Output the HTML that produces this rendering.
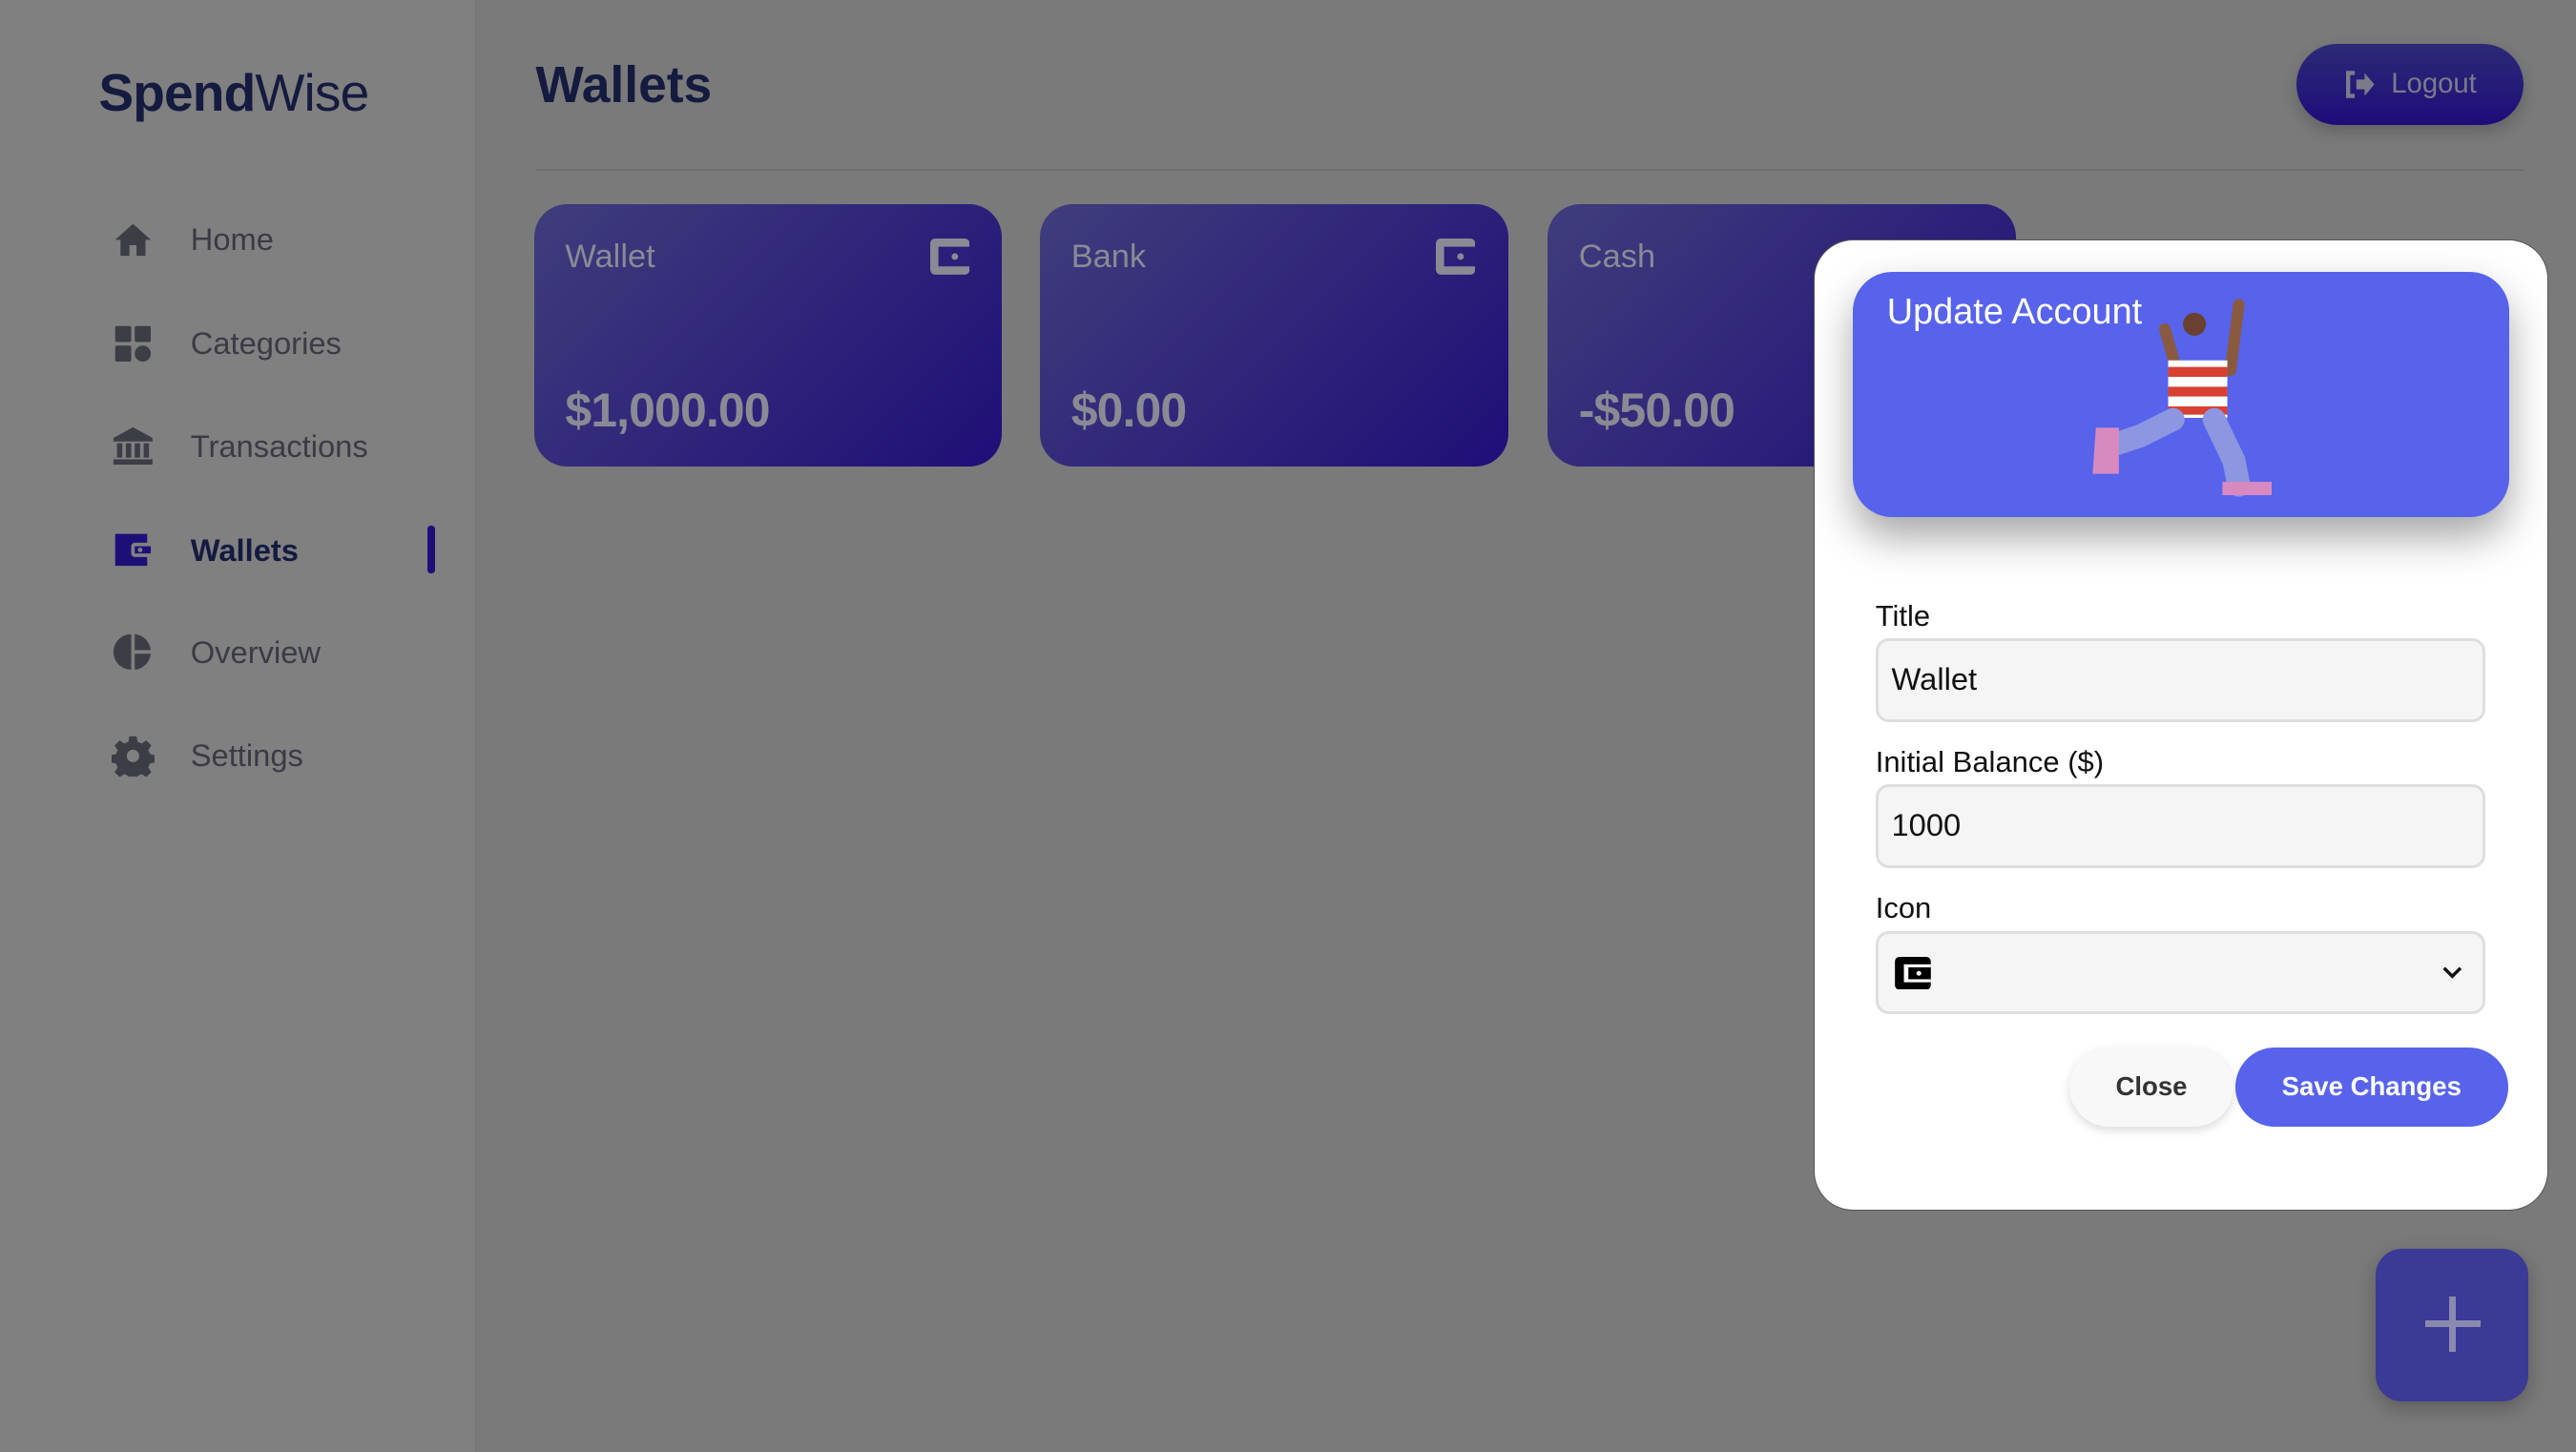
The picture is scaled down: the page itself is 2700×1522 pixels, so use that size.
<!DOCTYPE html>
<html><head><meta charset="utf-8"><style>
*{box-sizing:border-box;margin:0;padding:0}
html,body{width:2700px;height:1522px;overflow:hidden;background:#7a7a7a}
#root{zoom:1.72194;width:1568px;height:884px;position:relative;font-family:"Liberation Sans",sans-serif;background:#7a7a7a}
.side{position:absolute;left:0;top:0;width:290px;height:884px;background:#808080;border-right:1px solid #747474}
.logo{position:absolute;left:60px;top:38px;font-size:32px;color:#151a3f;letter-spacing:-0.5px}
.logo b{font-weight:700}
.nav{position:absolute;left:68px;font-size:19px;color:#3a3b44;display:flex;align-items:center}
.nav svg{width:26px;height:26px;margin-right:22px;fill:#3c3d45}
.nav.act{color:#151a3f;font-weight:700}
.nav.act svg{fill:#1e0f78}
.bar{position:absolute;left:260px;top:320px;width:5px;height:29px;background:#1e0f78;border-radius:2px}
h1{position:absolute;left:326px;top:34px;font-size:31px;color:#151a3f;font-weight:700}
.hr{position:absolute;left:326px;top:103px;width:1210px;height:1px;background:#6e6e6e}
.logout{position:absolute;left:1398px;top:27px;width:138px;height:49px;border-radius:25px;background:linear-gradient(#2c2a76,#1e0c7a);color:#7b7b8a;font-size:17px;display:flex;align-items:center;justify-content:center;box-shadow:0 4px 10px rgba(0,0,0,.2)}
.card{position:absolute;top:124px;width:285px;height:160px;border-radius:20px;background:linear-gradient(135deg,#403d7c,#1f0e78);color:#8a8a95}
.card .t{position:absolute;left:19px;top:21px;font-size:20px}
.card .a{position:absolute;left:19px;top:109px;font-size:29px;font-weight:700;letter-spacing:-0.5px}
.card svg{position:absolute;right:20px;top:21px;width:24px;height:22px}
.modal{position:absolute;left:1104px;top:146px;width:447px;height:591px;background:#fff;border-radius:24px;border:1px solid #555}
.hdr{position:absolute;left:23px;top:19px;width:400px;height:149px;border-radius:24px;background:#5763eb;box-shadow:0 12px 25px rgba(0,0,0,.35);overflow:hidden}
.hdr span{position:absolute;left:21px;top:12px;color:#fff;font-size:22px}
.lbl{position:absolute;left:37px;font-size:18px;color:#111}
.inp{position:absolute;left:37px;width:371px;height:51px;border:2px solid #dedede;border-radius:8px;background:#f5f5f5;font-size:19px;color:#111;padding:12px 8px}
.btn{position:absolute;top:491px;height:48px;border-radius:24px;font-size:16px;font-weight:700;display:flex;align-items:center;justify-content:center}
.fab{position:absolute;left:1446px;top:760px;width:93px;height:93px;border-radius:16px;background:#3b3a96;box-shadow:0 4px 12px rgba(0,0,0,.25)}
.fab:before{content:"";position:absolute;left:30px;top:44px;width:34px;height:4px;background:#8a8ab0}
.fab:after{content:"";position:absolute;left:45px;top:29px;width:4px;height:34px;background:#8a8ab0}
</style></head><body><div id="root">
<div class="side">
<div class="logo"><b>Spend</b>Wise</div>
<div class="nav" style="top:133px"><svg viewBox="0 0 24 24"><path d="M12 3L2 12h3v9h5v-6h4v6h5v-9h3z"/></svg>Home</div>
<div class="nav" style="top:196px"><svg viewBox="0 0 24 24"><rect x="2" y="2" width="9" height="9" rx="1"/><rect x="13" y="2" width="9" height="9" rx="1"/><rect x="2" y="13" width="9" height="9" rx="1"/><circle cx="17.5" cy="17.5" r="4.5"/></svg>Categories</div>
<div class="nav" style="top:259px"><svg viewBox="0 0 24 24"><path d="M12 1L1 7v2h22V7z M3 10h3v8H3z M8 10h3v8H8z M13 10h3v8h-3z M18 10h3v8h-3z M1 19h22v3H1z"/></svg>Transactions</div>
<div class="nav act" style="top:322px"><svg viewBox="0 0 24 24"><path d="M2 3h18v5h-7a2 2 0 0 0-2 2v4a2 2 0 0 0 2 2h7v5H2z M13 10h9v4h-9z"/><circle cx="16" cy="12" r="1.3" fill="#808080"/></svg>Wallets</div>
<div class="bar"></div>
<div class="nav" style="top:384px"><svg viewBox="0 0 24 24"><path d="M11 2A10 10 0 1 0 11 22z M13 2v9h9A10 10 0 0 0 13 2z M13 13v9a10 10 0 0 0 9-9z"/></svg>Overview</div>
<div class="nav" style="top:447px"><svg viewBox="0 0 24 24"><path d="M10 1h4l.6 3 2.3 1 2.6-1.7 2.8 2.8-1.7 2.6 1 2.3 3 .6v4l-3 .6-1 2.3 1.7 2.6-2.8 2.8-2.6-1.7-2.3 1-.6 3h-4l-.6-3-2.3-1-2.6 1.7-2.8-2.8 1.7-2.6-1-2.3-3-.6v-4l3-.6 1-2.3-1.7-2.6 2.8-2.8 2.6 1.7 2.3-1z M12 8.5a3.5 3.5 0 1 0 0 7 3.5 3.5 0 0 0 0-7z" fill-rule="evenodd"/></svg>Settings</div>
</div>
<h1>Wallets</h1>
<div class="hr"></div>
<div class="logout"><svg width="20" height="18" viewBox="0 0 20 18" style="margin-right:9px"><path d="M7 2H3v14h4" stroke="#7b7b8a" stroke-width="2.5" fill="none"/><path d="M8 6h5V2l6 7-6 7v-4H8z" fill="#7b7b8a"/></svg>Logout</div>
<div class="card" style="left:325px"><div class="t">Wallet</div><svg viewBox="0 0 24 22"><rect x="0" y="0" width="24" height="22" rx="3" fill="#8a8a95"/><rect x="5" y="5" width="19" height="12" fill="#2a1f7a"/><circle cx="15" cy="11" r="2" fill="#8a8a95"/></svg><div class="a">$1,000.00</div></div>
<div class="card" style="left:633px"><div class="t">Bank</div><svg viewBox="0 0 24 22"><rect x="0" y="0" width="24" height="22" rx="3" fill="#8a8a95"/><rect x="5" y="5" width="19" height="12" fill="#2a1f7a"/><circle cx="15" cy="11" r="2" fill="#8a8a95"/></svg><div class="a">$0.00</div></div>
<div class="card" style="left:942px"><div class="t">Cash</div><div class="a">-$50.00</div></div>
<div class="modal">
<div class="hdr"><span>Update Account</span>
<svg style="position:absolute;left:140px;top:10px" width="130" height="130" viewBox="0 0 130 130">
<path d="M50 25l10 35M95 10l-5 40" stroke="#8a5a40" stroke-width="7" stroke-linecap="round"/>
<circle cx="68" cy="22" r="7" fill="#6a4030"/>
<path d="M52 44h36v35H52z" fill="#fff"/><path d="M52 48h36v6H52zM52 60h36v6H52zM52 72h36v5H52z" fill="#d84030"/>
<path d="M55 80 L35 90 L20 95" stroke="#8d96e0" stroke-width="14" fill="none" stroke-linecap="round"/>
<path d="M80 80 L92 105 L95 120" stroke="#8d96e0" stroke-width="14" fill="none" stroke-linecap="round"/>
<path d="M8 85h14v28H6z" fill="#d88ac0"/><path d="M85 118h30v8H85z" fill="#d88ac0"/>
</svg></div>
<div class="lbl" style="top:218px">Title</div>
<div class="inp" style="top:242px">Wallet</div>
<div class="lbl" style="top:307px">Initial Balance ($)</div>
<div class="inp" style="top:331px">1000</div>
<div class="lbl" style="top:396px">Icon</div>
<div class="inp" style="top:420px"><svg width="22" height="20" viewBox="0 0 24 22" style="position:absolute;left:10px;top:14px"><rect x="0" y="0" width="24" height="22" rx="3" fill="#000"/><rect x="6" y="5" width="18" height="12" fill="#fff"/><rect x="9" y="7" width="15" height="8" fill="#000"/><circle cx="16" cy="11" r="1.6" fill="#fff"/></svg><svg width="12" height="8" viewBox="0 0 12 8" style="position:absolute;right:12px;top:20px"><path d="M1 1l5 5 5-5" stroke="#111" stroke-width="2" fill="none"/></svg></div>
<div class="btn" style="left:155px;width:100px;background:#f8f8f8;color:#333;box-shadow:0 2px 6px rgba(0,0,0,.15)">Close</div>
<div class="btn" style="left:256px;width:166px;background:#5763eb;color:#fff">Save Changes</div>
</div>
<div class="fab"></div>
</div></body></html>
